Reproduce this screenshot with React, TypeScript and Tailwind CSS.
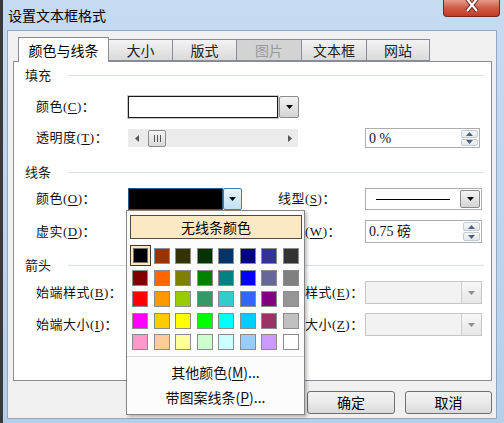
import React from 'react';

const SONG = "font-['Liberation_Serif','Noto_Sans_CJK_SC',serif] text-[13px] text-[#111]";

const palette = [
  ['#000000', '#993300', '#333300', '#003300', '#003366', '#000080', '#333399', '#333333'],
  ['#800000', '#ff6600', '#808000', '#008000', '#008080', '#0000ff', '#666699', '#808080'],
  ['#ff0000', '#ff9900', '#99cc00', '#339966', '#33cccc', '#3366ff', '#800080', '#969696'],
  ['#ff00ff', '#ffcc00', '#ffff00', '#00ff00', '#00ffff', '#00ccff', '#993366', '#c0c0c0'],
  ['#ff99cc', '#ffcc99', '#ffff99', '#ccffcc', '#ccffff', '#99ccff', '#cc99ff', '#ffffff'],
];

const tabs = [
  { name: '颜色与线条', cls: 'w-[91px] h-[25px] -mb-px bg-white border border-b-0 border-[#898c95] relative z-10 text-black' },
  { name: '大小', cls: 'w-[64px] h-[22px] bg-gradient-to-b from-[#f3f3f3] to-[#dadada] border border-l-0 border-[#898c95] text-[#222]' },
  { name: '版式', cls: 'w-[64px] h-[22px] bg-gradient-to-b from-[#f3f3f3] to-[#dadada] border border-l-0 border-[#898c95] text-[#222]' },
  { name: '图片', cls: 'w-[65px] h-[22px] bg-[#d3d3d3] border border-l-0 border-[#898c95] text-[#9a9a9a]' },
  { name: '文本框', cls: 'w-[65px] h-[22px] bg-gradient-to-b from-[#f3f3f3] to-[#dadada] border border-l-0 border-[#898c95] text-[#222]' },
  { name: '网站', cls: 'w-[63px] h-[22px] bg-gradient-to-b from-[#f3f3f3] to-[#dadada] border border-l-0 border-[#898c95] text-[#222]' },
];

function Label({ text, k }: { text: string; k: string }) {
  return (
    <span className="whitespace-nowrap tracking-[0.5px]">
      {text}(<span className="underline underline-offset-2">{k}</span>)：
    </span>
  );
}

function Caret({ color = '#000' }: { color?: string }) {
  return (
    <svg width="7" height="4" viewBox="0 0 7 4">
      <path d="M0 0h7L3.5 4z" fill={color} />
    </svg>
  );
}

function DropButton({ disabled = false }: { disabled?: boolean }) {
  return (
    <div
      className={
        disabled
          ? 'w-[20px] h-full border-l border-[#cfcfcf] bg-gradient-to-b from-[#f6f6f6] to-[#e6e6e6] flex items-center justify-center'
          : 'w-[20px] h-full border border-[#8a8a8a] rounded-[2px] bg-gradient-to-b from-[#f4f4f4] to-[#d4d4d4] flex items-center justify-center'
      }
    >
      <Caret color={disabled ? '#8c8c8c' : '#000'} />
    </div>
  );
}

function Spinner() {
  return (
    <div className="w-[19px] h-full flex flex-col gap-px p-px">
      <div className="flex-1 border border-[#c6cbd1] rounded-[2px] bg-gradient-to-b from-[#f7f7f7] to-[#e4e8ec] flex items-center justify-center">
        <svg width="7" height="4" viewBox="0 0 7 4">
          <path d="M0 4h7L3.5 0z" fill="#4a6384" />
        </svg>
      </div>
      <div className="flex-1 border border-[#c6cbd1] rounded-[2px] bg-gradient-to-b from-[#f7f7f7] to-[#e4e8ec] flex items-center justify-center">
        <svg width="7" height="4" viewBox="0 0 7 4">
          <path d="M0 0h7L3.5 4z" fill="#4a6384" />
        </svg>
      </div>
    </div>
  );
}

function Heading({ text }: { text: string }) {
  return (
    <div className="h-[20px] flex items-center pl-[11px] pr-[7px]">
      <span className="text-[13px] text-[#1a1a1a] font-['Noto_Sans_CJK_SC',sans-serif]">{text}</span>
      <div className="flex-1 ml-[17px] h-px bg-[#d5dfe5]" />
    </div>
  );
}

export default function App() {
  return (
    <div className="relative w-[504px] h-[423px] overflow-hidden flex bg-[#3a3a3a] pl-[3px] font-['Noto_Sans_CJK_SC',sans-serif]">
      <div className="relative flex-1 flex flex-col bg-gradient-to-b from-[#c5dbf1] via-[#bdd5ed] to-[#b6cfe9]">
        {/* title bar */}
        <div className="h-[30px] flex items-center pl-[5px] text-[14px] text-black">设置文本框格式</div>
        <div className="absolute top-0 right-[4px] w-[57px] h-[17px] rounded-b-[4px] border border-t-0 border-[#6e2b20] bg-gradient-to-b from-[#e49a86] via-[#cf5a44] to-[#c03b27] flex items-start justify-center">
          <svg width="14" height="12" viewBox="0 0 14 12">
            <path d="M2 -1L12 11M12 -1L2 11" stroke="#5a2118" strokeWidth="4" />
            <path d="M2 -1L12 11M12 -1L2 11" stroke="#fff" strokeWidth="2.2" />
          </svg>
        </div>

        {/* client area */}
        <div className="flex-1 ml-[4px] mr-[7px] mb-[4px] border border-[#8fa8c3] bg-[#f0f0f0] flex flex-col pt-[6px]">
          <div className="h-[24px] flex items-end pl-[10px] text-[14px]">
            {tabs.map((t) => (
              <div key={t.name} className={t.cls + ' flex items-center justify-center'}>
                {t.name}
              </div>
            ))}
          </div>

          {/* tab panel */}
          <div className={'ml-[5px] w-[479px] h-[320px] bg-white border border-[#898c95] flex flex-col pt-[3px] ' + SONG}>
            <Heading text="填充" />
            <div className="mt-[11px] h-[22px] flex items-center pl-[22px]">
              <div className="w-[92px]"><Label text="颜色" k="C" /></div>
              <div className="w-[150px] h-full border border-[#1a1a1a] bg-white outline outline-1 outline-[#c8c8c8]" />
              <div className="ml-px h-full"><DropButton /></div>
            </div>
            <div className="mt-[10px] h-[20px] flex items-center pl-[22px]">
              <div className="w-[92px]"><Label text="透明度" k="T" /></div>
              <div className="w-[170px] h-[18px] bg-[#ebebeb] flex items-center pl-[7px] pr-[6px]">
                <svg width="4" height="7" viewBox="0 0 4 7">
                  <path d="M4 0v7L0 3.5z" fill="#555" />
                </svg>
                <div className="ml-[9px] w-[18px] h-[17px] border border-[#8a8a8a] rounded-[2px] bg-gradient-to-b from-[#f6f6f6] to-[#d8d8d8] flex items-center justify-center gap-[2px]">
                  <div className="w-px h-[7px] bg-[#555]" />
                  <div className="w-px h-[7px] bg-[#555]" />
                  <div className="w-px h-[7px] bg-[#555]" />
                </div>
                <div className="flex-1" />
                <svg width="4" height="7" viewBox="0 0 4 7">
                  <path d="M0 0v7L4 3.5z" fill="#555" />
                </svg>
              </div>
              <div className="ml-[67px] w-[115px] h-full border border-[#abadb3] bg-white flex items-center">
                <span className="flex-1 pl-[3px] text-[14px]">0 %</span>
                <Spinner />
              </div>
            </div>

            <div className="mt-[14px]"><Heading text="线条" /></div>
            <div className="mt-[6px] h-[22px] flex items-center pl-[22px]">
              <div className="w-[92px]"><Label text="颜色" k="O" /></div>
              <div className="w-[95px] h-full border border-[#2b5a86] bg-black" />
              <div className="w-[19px] h-full border border-[#3c7fb1] rounded-[2px] bg-gradient-to-b from-[#e8f5fd] to-[#bfe2f6] flex items-center justify-center">
                <Caret />
              </div>
              <div className="ml-[36px] w-[87px]"><Label text="线型" k="S" /></div>
              <div className="w-[117px] h-full border border-[#abadb3] bg-white flex items-center pl-[10px]">
                <div className="w-[74px] h-px bg-black" />
                <div className="flex-1" />
                <div className="h-full py-px pr-px"><DropButton /></div>
              </div>
            </div>
            <div className="mt-[10px] h-[23px] flex items-center pl-[22px]">
              <div className="w-[92px]"><Label text="虚实" k="D" /></div>
              <div className="w-[114px] h-full border border-[#abadb3] bg-white" />
              <div className="ml-[36px] w-[87px]"><Label text="粗细" k="W" /></div>
              <div className="w-[117px] h-full border border-[#abadb3] bg-white flex items-center">
                <span className="flex-1 pl-[3px] text-[14px]">0.75 磅</span>
                <Spinner />
              </div>
            </div>

            <div className="mt-[12px]"><Heading text="箭头" /></div>
            <div className="mt-[6px] h-[23px] flex items-center pl-[22px]">
              <div className="w-[92px]"><Label text="始端样式" k="B" /></div>
              <div className="w-[114px] h-full border border-[#abadb3] bg-white" />
              <div className="ml-[36px] w-[87px]"><Label text="终端样式" k="E" /></div>
              <div className="w-[117px] h-full border border-[#c6c6c6] bg-[#f2f2f2] flex justify-end">
                <DropButton disabled />
              </div>
            </div>
            <div className="mt-[9px] h-[23px] flex items-center pl-[22px]">
              <div className="w-[92px]"><Label text="始端大小" k="I" /></div>
              <div className="w-[114px] h-full border border-[#abadb3] bg-white" />
              <div className="ml-[36px] w-[87px]"><Label text="终端大小" k="Z" /></div>
              <div className="w-[117px] h-full border border-[#c6c6c6] bg-[#f2f2f2] flex justify-end">
                <DropButton disabled />
              </div>
            </div>
          </div>

          {/* buttons */}
          <div className="mt-[10px] flex justify-end gap-[10px] pr-[4px] text-[14px]">
            <div className="w-[88px] h-[23px] border border-[#707070] rounded-[3px] bg-gradient-to-b from-[#f3f3f3] via-[#ebebeb] to-[#d9d9d9] flex items-center justify-center">确定</div>
            <div className="w-[87px] h-[23px] border border-[#707070] rounded-[3px] bg-gradient-to-b from-[#f3f3f3] via-[#ebebeb] to-[#d9d9d9] flex items-center justify-center">取消</div>
          </div>
        </div>
      </div>

      {/* colour drop-down */}
      <div className="absolute left-[126px] top-[210px] w-[179px] h-[205px] bg-[#fcfcfc] border border-[#868686] shadow-[2px_2px_3px_rgba(0,0,0,0.25)] flex flex-col pl-[3px] pt-[4px]">
        <div className="w-[172px] h-[24px] border border-[#4b4b4b] bg-[#fde8c4] flex items-center justify-center text-[14px] text-black">
          无线条颜色
        </div>
        <div className="mt-[7px] grid grid-cols-[repeat(8,21.5px)] grid-rows-[repeat(5,21.5px)]">
          {palette.flatMap((row, r) =>
            row.map((c, i) =>
              r === 0 && i === 0 ? (
                <div key={c} className="w-[21px] h-[21px] -mt-px border border-[#4a3520] bg-[#fde8c4] flex items-center justify-center">
                  <div className="w-[15px] h-[15px] border border-[#707070]" style={{ backgroundColor: c }} />
                </div>
              ) : (
                <div key={c} className="pl-[2px] pt-[2px]">
                  <div className="w-[16px] h-[16px] border border-[#8c8c8c]" style={{ backgroundColor: c }} />
                </div>
              )
            )
          )}
        </div>
        <div className="mt-[2px] -ml-[3px] h-px bg-[#d9d9d9]" />
        <div className="mt-[3px] -ml-[3px] h-[25px] flex items-center justify-center text-[14px] text-[#111]">
          其他颜色(<span className="underline underline-offset-2">M</span>)...
        </div>
        <div className="-ml-[3px] h-[25px] flex items-center justify-center text-[14px] text-[#111]">
          带图案线条(<span className="underline underline-offset-2">P</span>)...
        </div>
      </div>
    </div>
  );
}
